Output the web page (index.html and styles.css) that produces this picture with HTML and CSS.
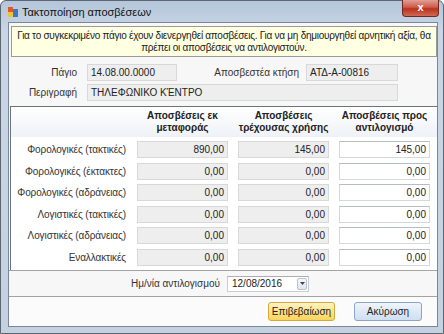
FILE: index.html
```html
<!DOCTYPE html>
<html lang="el">
<head>
    <meta charset="UTF-8">
    <meta name="viewport" content="width=device-width, initial-scale=1.0">
    <title>Τακτοποίηση αποσβέσεων</title>
    <link rel="stylesheet" href="styles.css">
</head>
<body>
    <div class="window">
        <div class="titlebar">
            <svg class="app-icon" width="10" height="10" viewBox="0 0 10 10">
                <rect x="0" y="0" width="5" height="5" fill="#e2572b"/>
                <rect x="0" y="5" width="5" height="5" fill="#f1c232"/>
                <rect x="5" y="2" width="5" height="8" fill="#3b78c8"/>
            </svg>
            <span class="title">Τακτοποίηση αποσβέσεων</span>
            <div class="close-btn">x</div>
        </div>

        <div class="client">
            <div class="info">
                Για το συγκεκριμένο πάγιο έχουν διενεργηθεί αποσβέσεις. Για να μη δημιουργηθεί αρνητική αξία, θα<br>
                πρέπει οι αποσβέσεις να αντιλογιστούν.
            </div>

            <div class="fields">
                <div class="field-row">
                    <label class="lbl lbl-main">Πάγιο</label>
                    <div class="box disabled box-code">14.08.00.0000</div>
                    <label class="lbl lbl-acq">Αποσβεστέα κτήση</label>
                    <div class="box disabled box-acq">ΑΤΔ-Α-00816</div>
                </div>
                <div class="field-row">
                    <label class="lbl lbl-main">Περιγραφή</label>
                    <div class="box disabled box-desc">ΤΗΛΕΦΩΝΙΚΟ ΚΈΝΤΡΟ</div>
                </div>
            </div>

            <div class="panel">
                <div class="grid panel-head">
                    <div></div>
                    <div class="col-head">Αποσβέσεις εκ<br>μεταφοράς</div>
                    <div class="col-head">Αποσβέσεις<br>τρέχουσας χρήσης</div>
                    <div class="col-head">Αποσβέσεις προς<br>αντιλογισμό</div>
                </div>
                <div class="grid panel-rows" id="rows"></div>
            </div>

            <div class="date-row">
                <label class="lbl">Ημ/νία αντιλογισμού</label>
                <div class="date-box">
                    <span class="date-text">12/08/2016</span>
                    <span class="date-drop">
                        <svg width="5" height="3" viewBox="0 0 5 3"><path d="M0 0h5L2.5 3z" fill="#444"/></svg>
                    </span>
                </div>
            </div>

            <div class="buttons">
                <button class="btn btn-ok">Επιβεβαίωση</button>
                <button class="btn btn-cancel">Ακύρωση</button>
            </div>
        </div>
    </div>

    <script>
        const rows = [
            { name: "Φορολογικές (τακτικές)", prev: "890,00", cur: "145,00", rev: "145,00" },
            { name: "Φορολογικές (έκτακτες)", prev: "0,00", cur: "0,00", rev: "0,00" },
            { name: "Φορολογικές (αδράνειας)", prev: "0,00", cur: "0,00", rev: "0,00" },
            { name: "Λογιστικές (τακτικές)", prev: "0,00", cur: "0,00", rev: "0,00" },
            { name: "Λογιστικές (αδράνειας)", prev: "0,00", cur: "0,00", rev: "0,00" },
            { name: "Εναλλακτικές", prev: "0,00", cur: "0,00", rev: "0,00" }
        ];

        let html = "";
        rows.forEach(row => {
            html += `
                <div class="row-label">${row.name}</div>
                <div class="box disabled num">${row.prev}</div>
                <div class="box disabled num">${row.cur}</div>
                <div class="box num">${row.rev}</div>
            `;
        });
        document.getElementById("rows").innerHTML = html;
    </script>
</body>
</html>
```

FILE: styles.css
```css
*,
*::before,
*::after {
    box-sizing: border-box;
}
body {
    margin: 0;
    font-family: "Liberation Sans", Arial, sans-serif;
    font-size: 10px;
    color: #222;
    background: #fff;
}
.window {
    width: 444px;
    height: 334px;
    display: flex;
    flex-direction: column;
    padding: 0 5px 6px 7px;
    border: 1px solid #5d6570;
    border-radius: 6px 6px 0 0;
    background: linear-gradient(180deg, #b4c6db 0%, #c9d6e5 30px, #c3d1e1 100%);
}
.titlebar {
    height: 21px;
    display: flex;
    align-items: center;
}
.app-icon {
    flex: none;
}
.title {
    margin-left: 4px;
    font-size: 11px;
    color: #111;
}
.close-btn {
    margin-left: auto;
    margin-right: -1px;
    align-self: flex-start;
    margin-top: -1px;
    width: 37px;
    height: 17px;
    border: 1px solid #6b2a23;
    border-top: none;
    border-radius: 0 0 4px 4px;
    background: linear-gradient(180deg, #e0a095 0%, #cf5a48 45%, #b8321f 55%, #d26a52 100%);
    color: #fff;
    font-weight: bold;
    font-size: 11px;
    text-align: center;
    line-height: 15px;
}
.client {
    flex: 1;
    display: flex;
    flex-direction: column;
    background: #f7f7f7;
    border: 1px solid #7c8796;
}
.info {
    height: 31px;
    margin: 3px 0 0 2px;
    padding-top: 3px;
    background: #ffffe1;
    border: 1px solid #9a9a9a;
    text-align: center;
    line-height: 12px;
    white-space: nowrap;
    letter-spacing: -0.27px;
    color: #1a1a1a;
}
.fields {
    margin-top: 7px;
    display: flex;
    flex-direction: column;
    gap: 3px;
}
.field-row {
    display: flex;
    align-items: center;
}
.lbl {
    text-align: right;
    color: #333;
}
.lbl-main {
    width: 68px;
    margin-right: 10px;
}
.lbl-acq {
    width: 122px;
    margin-right: 7px;
}
.box {
    height: 17px;
    padding: 0 3px;
    display: flex;
    align-items: center;
    background: #fff;
    border: 1px solid #d4d7dc;
    border-top-color: #b8bcc3;
    color: #222;
}
.box.disabled {
    background: #eeeeee;
    border-color: #d8d8d8;
}
.box-code {
    width: 90px;
}
.box-acq {
    width: 92px;
}
.box-desc {
    width: 311px;
}
.panel {
    margin: 5px 0 0 1px;
    height: 164px;
    border-top: 1px solid #6b7380;
    border-left: 1px solid #6b7380;
    background: #fff;
}
.grid {
    display: grid;
    grid-template-columns: 116px 91px 91px 91px;
    column-gap: 10px;
}
.panel-head {
    height: 30px;
    align-items: center;
    background: linear-gradient(180deg, #ffffff 0%, #eef2f7 100%);
}
.col-head {
    text-align: center;
    font-weight: bold;
    line-height: 12px;
    color: #222;
}
.panel-rows {
    margin-top: 4px;
    row-gap: 4.6px;
}
.row-label {
    padding-right: 1px;
    text-align: right;
    align-self: center;
    letter-spacing: -0.1px;
    color: #333;
}
.num {
    justify-content: flex-end;
    height: 17px;
}
.date-row {
    height: 27px;
    display: flex;
    align-items: center;
    border-top: 1px solid #a3a3a3;
    border-bottom: 1px solid #a3a3a3;
}
.date-row .lbl {
    width: 211px;
    margin-right: 7px;
}
.date-box {
    width: 82px;
    height: 16px;
    display: flex;
    align-items: center;
    background: #fff;
    border: 1px solid #c9ccd1;
    border-top-color: #abadb3;
}
.date-text {
    flex: 1;
    padding-left: 4px;
    color: #222;
}
.date-drop {
    width: 10px;
    height: 12px;
    margin-right: 1px;
    display: flex;
    align-items: center;
    justify-content: center;
    border: 1px solid #b8c4d3;
    border-radius: 2px;
    background: linear-gradient(180deg, #f4f7fb, #dde5ee);
}
.buttons {
    flex: 1;
    display: flex;
    justify-content: flex-end;
    align-items: center;
    gap: 19px;
    padding-right: 15px;
    background: #fbfbfb;
}
.btn {
    height: 19px;
    padding: 0;
    font-family: inherit;
    font-size: 10px;
    color: #222;
    border-radius: 3px;
}
.btn-ok {
    width: 67px;
    background: linear-gradient(180deg, #fff3c4 0%, #fde38a 50%, #f9d55b 100%);
    border: 1px solid #d2a93a;
}
.btn-cancel {
    width: 68px;
    background: linear-gradient(180deg, #eef5fc 0%, #dde9f6 50%, #cfdff1 100%);
    border: 1px solid #8aa5c6;
}
```
